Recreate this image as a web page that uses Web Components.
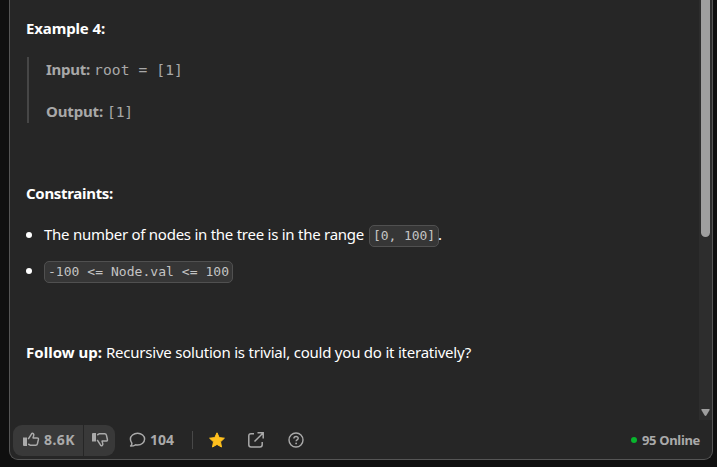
<!DOCTYPE html>
<html lang="en"><head><meta charset="utf-8"><title>Problem description</title>
<style>
html,body{margin:0;background:#0f0f0f;overflow:hidden}
body{font:15px/24px "Noto Sans","Open Sans",sans-serif;color:#fff}
</style></head><body>
<problem-panel>
 <text-row style="margin-top:16px"><fit-text w="79" b>Example 4:</fit-text></text-row>
 <quote-block>
  <text-row><fit-text w="44" b>Input:</fit-text><fit-text w="89" mono style="margin-left:4px">root = [1]</fit-text></text-row>
  <text-row style="margin-top:18px"><fit-text w="57" b>Output:</fit-text><fit-text w="26" mono style="margin-left:4px">[1]</fit-text></text-row>
 </quote-block>
 <text-row style="margin-top:58px"><fit-text w="87" b>Constraints:</fit-text></text-row>
 <bullet-row style="margin-top:17px"><fit-text w="320">The number of nodes in the tree is in the range</fit-text><code-chip style="margin-left:5px" w="62">[0, 100]</code-chip><fit-text w="4" style="margin-left:-1px">.</fit-text></bullet-row>
 <bullet-row style="margin-top:12px"><code-chip w="181" style="margin-top:3px">-100 &lt;= Node.val &lt;= 100</code-chip></bullet-row>
 <text-row style="margin-top:58px"><fit-text w="76" b>Follow up:</fit-text><fit-text w="365" style="margin-left:4px">Recursive solution is trivial, could you do it iteratively?</fit-text></text-row>
 <scroll-bar slot="bar"></scroll-bar>
 <action-bar slot="footer"></action-bar>
</problem-panel>
<script>
const define=(name,html,ready)=>customElements.define(name,class extends HTMLElement{
 connectedCallback(){
  if(this.shadowRoot)return;
  const t=document.createElement('template');t.innerHTML=html;
  this.attachShadow({mode:'open'}).append(t.content.cloneNode(true));
  if(ready)ready(this);
 }});
// Tracks a run of text so that it occupies its nominal width.
define('fit-text',`<style>:host{display:inline-block;white-space:pre;flex:none}:host([b]){font-weight:700}
:host([mono]){font-family:"DejaVu Sans Mono",monospace;font-size:14.6px}</style><slot></slot>`,el=>{
 const w=+el.getAttribute('w'),n=el.textContent.length;
 const d=w-el.getBoundingClientRect().width;
 if(n>1){el.style.letterSpacing=(d/n)+'px'}
 el.style.width=w+'px';
});
define('text-row',`<style>:host{display:flex;height:24px;align-items:baseline}</style><slot></slot>`);
define('quote-block',`<style>:host{display:block;box-sizing:border-box;height:66px;margin:17px 0 0 1px;padding:0 0 0 17px;border-left:2px solid #464646;color:#a8a8a8}</style><slot></slot>`);
define('bullet-row',`<style>:host{display:flex;height:24px;align-items:baseline}i{width:6px;height:6px;border-radius:50%;background:#fff;align-self:center;margin:2px 12px 0 0;flex:none}</style><i></i><slot></slot>`);
define('code-chip',`<style>:host{display:inline-block;box-sizing:content-box;height:20px;line-height:20px;padding:0 3px;border:1px solid #505050;border-radius:5px;background:#363636;color:#c4c4c4;font-family:"DejaVu Sans Mono",monospace;font-size:13px;white-space:pre;flex:none}</style><slot></slot>`,el=>{
 const w=+el.getAttribute('w'),d=w-(el.getBoundingClientRect().width-8);
 el.style.letterSpacing=(d/el.textContent.length)+'px';el.style.width=w+'px';
});
define('problem-panel',`<style>:host{display:grid;grid-template:420px 39px / 1fr 13px;box-sizing:border-box;margin-left:9px;width:704px;height:460px;border:1px solid #555;border-top:0;border-radius:0 0 9px 9px;background:#262626;overflow:hidden}
main{padding-left:16px;display:flow-root}footer{grid-column:1/3;display:block}</style><main><slot></slot></main><slot name="bar"></slot><footer><slot name="footer"></slot></footer>`);
define('scroll-bar',`<style>:host{display:flex;flex-direction:column;justify-content:space-between;align-items:flex-start;background:#2d2d2d;padding-left:2px}
b{width:9px;height:237px;border-radius:0 0 5px 5px;background:#9f9f9f}svg{display:block;margin:0 0 4px 0}</style><b></b><svg width="10" height="7"><path d="M1 0h7q1 0 .6 1L5.500 6.300q-1 1.200-2 0L.4 1Q0 0 1 0Z" fill="#9f9f9f"/></svg>`);
define('vote-group',`<style>:host{display:flex;height:31px;width:102px;border-radius:9px;overflow:hidden;gap:1px}
div{background:#393939;display:flex;align-items:center;box-sizing:border-box}.u{width:70px;padding-left:10px}.d{width:31px;padding-left:8px}fit-text{margin:-1px 0 0 4px}svg{display:block;flex:none;margin-top:-1px}</style>
<div class="u"><svg width="17" height="16" viewBox="0 0 17 16"><path d="M0 5.500h4V14H1q-1 0-1-1Z" fill="#aaa"/><path d="M5.200 7.200 8.600 1.800q.7-1 1.700-.2.8.7.4 2L10 5.900h4q1.700 0 1.400 1.600l-1 4.400q-.3 1.300-1.700 1.300H7.100L5.200 12" fill="none" stroke="#aaa" stroke-width="1.500" stroke-linejoin="round"/></svg><fit-text w="31" b style="font-size:14px">8.6K</fit-text></div>
<div class="d"><svg style="margin-top:-3px" width="17" height="16" viewBox="0 0 17 16"><path d="M0 10.500h4V2H1Q0 2 0 3Z" fill="#aaa"/><path d="m5.200 8.800 3.400 5.400q.7 1 1.700.2.8-.7.4-2L10 10.100h4q1.700 0 1.400-1.600l-1-4.400q-.3-1.300-1.700-1.300H7.100L5.200 4" fill="none" stroke="#aaa" stroke-width="1.500" stroke-linejoin="round"/></svg></div>`);
define('action-bar',`<style>:host{display:flex;align-items:center;height:31px;padding:5px 12px 0 3px;color:#aaa;font-size:14px}
svg{display:block;flex:none;margin-top:-1px}hr{width:1px;height:18px;border:0;background:#484848;margin:-1px 16px 0 18px}fit-text{margin:-1px 0 0 5px}i{width:6px;height:6px;border-radius:50%;background:#08b52d;margin:-2px 0 0 auto}</style>
<vote-group></vote-group>
<svg style="margin-left:14px" width="17" height="16" viewBox="0 0 17 16"><path d="M8.600 1.300c4 0 7 2.600 7 5.800s-3 5.900-7 5.900q-1 0-2-.2-2.200 1.400-5 1.300 1.400-1.300 1.300-2.900Q1.400 9.500 1.400 7.100c0-3.200 3.200-5.800 7.200-5.800Z" fill="none" stroke="#aaa" stroke-width="1.500" stroke-linejoin="round"/></svg>
<fit-text w="24" b style="margin-left:4px">104</fit-text><hr>
<svg width="16" height="16" viewBox="0 0 16 16"><path d="m8 .8 2.200 4.800 5.200.6-3.900 3.600 1 5.200L8 12.400 3.500 15l1-5.200L.6 6.200l5.200-.6Z" fill="#ffc01e" stroke="#ffc01e" stroke-linejoin="round"/></svg>
<svg style="margin-left:23px" width="16" height="16" viewBox="0 0 16 16"><path d="M6 1.700H3Q.8 1.700.8 4v8.800Q.8 15 3 15h9q2.200 0 2.200-2.200V10M9.500.8h5.700v5.700M14.800 1.200 6.500 9.500" fill="none" stroke="#aaa" stroke-width="1.500"/></svg>
<svg style="margin-left:24px" width="16" height="16" viewBox="0 0 16 16"><circle cx="8" cy="8" r="7" fill="none" stroke="#aaa" stroke-width="1.400"/><path d="M5.900 6.600C6 3.700 10.300 4 10.200 6.400 10.100 7.900 8.100 7.800 8.100 9.200" fill="none" stroke="#aaa" stroke-width="1.400"/><circle cx="8.100" cy="11.400" r=".9" fill="#aaa"/></svg>
<i></i><fit-text w="58" b style="font-size:13px">95 Online</fit-text>`);
</script></body></html>
